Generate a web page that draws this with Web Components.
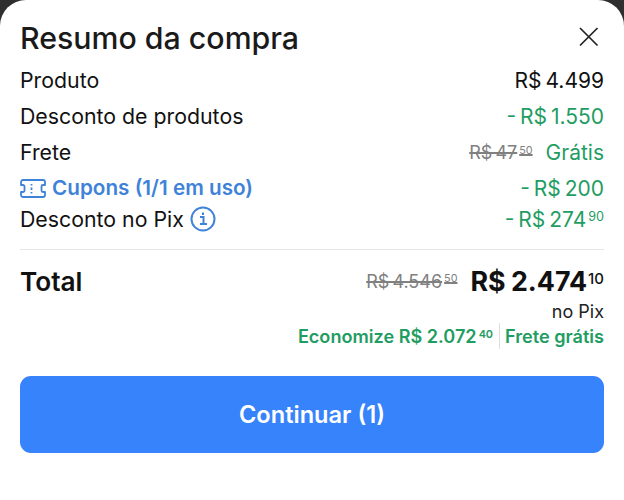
<!DOCTYPE html>
<html lang="pt-BR">
<head>
<meta charset="utf-8">
<title>Resumo da compra</title>
<style>
  html, body { margin: 0; height: 100%; }
  body { background: #2f2f2f; font-family: Inter, "Liberation Sans", sans-serif; color: #111; overflow: hidden; }
</style>
</head>
<body>
<template id="sheet-tpl">
  <style>
    :host { display: block; box-sizing: border-box; width: 624px; height: 500px; background: #fff; border-radius: 26px 26px 0 0; padding: 0 20px; }
    header { display: flex; justify-content: space-between; align-items: center; box-sizing: border-box; height: 62px; padding-top: 12px; }
    h1 { margin: 2px 0 0; font-size: 30.3px; font-weight: 500; line-height: 40px; color: #1a1a1a; }
    svg { display: block; }
  </style>
  <header>
    <h1><slot name="title"></slot></h1>
    <svg width="30" height="30" viewBox="0 0 30 30" fill="none" stroke="#222" stroke-width="1.7"><path d="M6 6 23.5 23.5M23.5 6 6 23.5"/></svg>
  </header>
  <slot></slot>
</template>

<template id="row-tpl">
  <style>
    :host { display: flex; justify-content: space-between; align-items: center; height: 36px; font-size: 21.3px; line-height: 36px; color: #111; }
    :host([tight]) { height: 26px; line-height: 26px; }
    .v { display: flex; align-items: center; gap: 13px; font-size: 21px; padding-top: 2px; }
    :host([green]) .v { color: #1f9d63; }
  </style>
  <div><slot></slot></div>
  <div class="v"><slot name="value"></slot></div>
</template>

<template id="money-tpl">
  <style>
    :host { display: inline-block; white-space: nowrap; word-spacing: -2px; }
    :host([old]) { color: #808080; font-size: 18px; text-decoration: line-through; text-decoration-thickness: 1.5px; }
    :host([plain]) { word-spacing: 0; }
    sup { font-size: .6em; line-height: 0; vertical-align: .5em; margin-left: 2px; }
    sup:empty { display: none; }
    :host(.big) { word-spacing: -1px; }
    :host(.big) sup { font-size: .56em; font-weight: 500; margin-left: 1px; }
  </style>
  <slot></slot><sup id="c"></sup>
</template>

<template id="total-tpl">
  <style>
    :host { display: block; border-top: 1px solid #e6e6e6; margin-top: 17px; padding-top: 13px; }
    .top { display: flex; justify-content: space-between; align-items: center; height: 36px; }
    .label { font-size: 26.2px; font-weight: 600; color: #111; }
    .price { display: flex; align-items: center; gap: 13px; }
    .big { font-size: 26.8px; font-weight: 700; color: #111; }
    .pix { text-align: right; font-size: 18px; line-height: 24px; margin-top: 1px; color: #222; }
    .save { display: flex; justify-content: flex-end; align-items: center; margin-top: -1px; color: #1f9d63; font-size: 18.1px; font-weight: 600; line-height: 26px; }
    .save i { display: block; width: 1px; height: 26px; background: #ddd; margin: 0 5px 0 6px; }
  </style>
  <div class="top">
    <div class="label">Total</div>
    <div class="price">
      <money-value old cents="50">R$ 4.546</money-value>
      <money-value class="big" cents="10">R$ 2.474</money-value>
    </div>
  </div>
  <div class="pix">no Pix</div>
  <div class="save"><money-value plain cents="40">Economize R$ 2.072</money-value><i></i><span>Frete grátis</span></div>
</template>

<template id="btn-tpl">
  <style>
    :host { display: block; margin-top: 27px; }
    button { display: block; width: 100%; height: 77px; border: 0; border-radius: 11px; background: #3783fb; color: #fff; font: 600 23.6px Inter, "Liberation Sans", sans-serif; }
  </style>
  <button><slot></slot></button>
</template>

<summary-sheet>
  <span slot="title">Resumo da compra</span>
  <price-row>Produto<money-value slot="value">R$ 4.499</money-value></price-row>
  <price-row green>Desconto de produtos<money-value slot="value">- R$ 1.550</money-value></price-row>
  <price-row green>Frete<money-value slot="value" old cents="50">R$ 47</money-value><span slot="value">Grátis</span></price-row>
  <price-row green>
    <span style="display:flex;align-items:center;gap:6px;color:#3f83d8;font-weight:600;font-size:20.7px">
      <svg width="26" height="19" viewBox="0 0 26 19" fill="none" stroke="#3f83d8" stroke-width="1.8" stroke-linejoin="round"><path d="M3 1H23a2 2 0 0 1 2 2V6h-2a1.5 1.5 0 0 0-1.5 1.5v4A1.5 1.5 0 0 0 23 13h2v3a2 2 0 0 1-2 2H3a2 2 0 0 1-2-2V13h2a1.5 1.5 0 0 0 1.5-1.5v-4A1.5 1.5 0 0 0 3 6H1V3a2 2 0 0 1 2-2Z"/><path d="M11.5 5v1.5M11.5 8.5v2.5M11.5 13v1.5"/></svg>
      Cupons (1/1 em uso)
    </span>
    <money-value slot="value">- R$ 200</money-value>
  </price-row>
  <price-row green tight>
    <span style="display:flex;align-items:center;gap:6px;color:#111">Desconto no Pix
      <svg width="26" height="26" viewBox="0 0 26 26" fill="none" stroke="#3f83d8" stroke-width="2"><circle cx="13" cy="13" r="11.5"/><path d="M10 11h3.5v7M10 18h7M13 6.5v2.5"/></svg>
    </span>
    <money-value slot="value" cents="90">- R$ 274</money-value>
  </price-row>
  <total-box></total-box>
  <continue-button>Continuar (1)</continue-button>
</summary-sheet>

<script>
  // tiny helper so each class only names its template
  function shadowFrom(el, id) {
    const root = el.attachShadow({ mode: 'open' });
    root.appendChild(document.getElementById(id).content.cloneNode(true));
    return root;
  }

  class SummarySheet extends HTMLElement {
    constructor() { super(); shadowFrom(this, 'sheet-tpl'); }
  }
  class PriceRow extends HTMLElement {
    constructor() { super(); shadowFrom(this, 'row-tpl'); }
  }
  class MoneyValue extends HTMLElement {
    constructor() { super(); shadowFrom(this, 'money-tpl'); }
    connectedCallback() {
      this.shadowRoot.getElementById('c').textContent = this.getAttribute('cents') || '';
    }
  }
  class TotalBox extends HTMLElement {
    constructor() { super(); shadowFrom(this, 'total-tpl'); }
  }
  class ContinueButton extends HTMLElement {
    constructor() { super(); shadowFrom(this, 'btn-tpl'); }
  }

  customElements.define('summary-sheet', SummarySheet);
  customElements.define('price-row', PriceRow);
  customElements.define('money-value', MoneyValue);
  customElements.define('total-box', TotalBox);
  customElements.define('continue-button', ContinueButton);
</script>
</body>
</html>
